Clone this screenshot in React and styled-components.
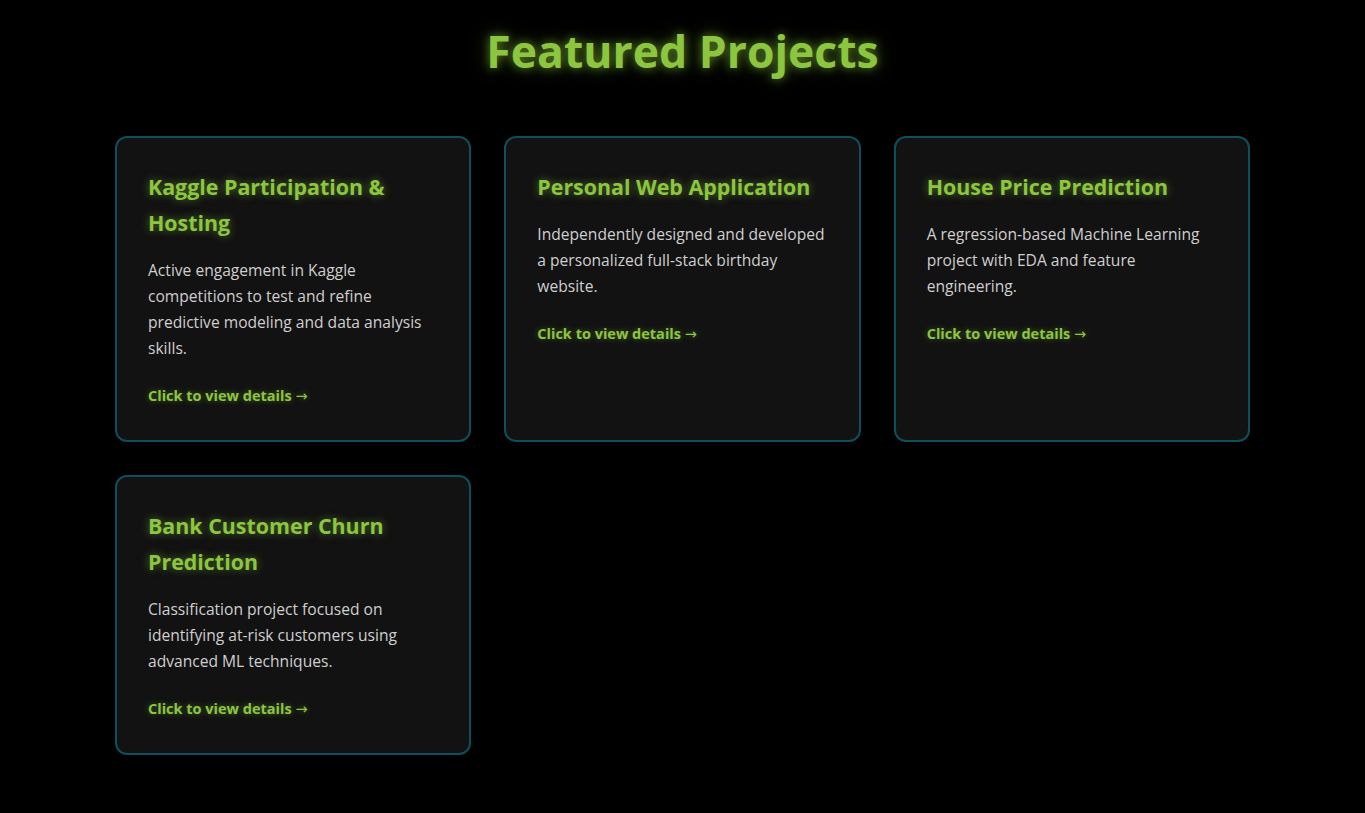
import React from 'react';
import styled, { createGlobalStyle } from 'styled-components';

const projects = [
  {
    title: 'Kaggle Participation & Hosting',
    text: 'Active engagement in Kaggle competitions to test and refine predictive modeling and data analysis skills.',
  },
  {
    title: 'Personal Web Application',
    text: 'Independently designed and developed a personalized full-stack birthday website.',
  },
  {
    title: 'House Price Prediction',
    text: 'A regression-based Machine Learning project with EDA and feature engineering.',
  },
  {
    title: 'Bank Customer Churn Prediction',
    text: 'Classification project focused on identifying at-risk customers using advanced ML techniques.',
  },
];

const App = () => {
  return (
    <>
      <GlobalStyle />
      <Section>
        <Heading>Featured Projects</Heading>
        <Grid>
          {projects.map((p) => (
            <Card key={p.title}>
              <CardTitle>{p.title}</CardTitle>
              <CardText>{p.text}</CardText>
              <DetailsLink>
                Click to view details <Arrow>→</Arrow>
              </DetailsLink>
            </Card>
          ))}
        </Grid>
      </Section>
    </>
  );
};

const GlobalStyle = createGlobalStyle`
  body {
    margin: 0;
    background: #000;
    font-family: "Segoe UI", "Open Sans", "Noto Sans", sans-serif;
  }
`;

const Section = styled.section`
  min-height: 813px;
  padding: 22px 0 40px;
  box-sizing: border-box;
  background: #000;
`;

const Heading = styled.h1`
  margin: 0 0 56px;
  text-align: center;
  font-size: 44.5px;
  line-height: 58px;
  font-weight: 700;
  color: #8cc63f;
  text-shadow: 0 0 10px rgba(140, 198, 63, 0.6), 0 0 22px rgba(140, 198, 63, 0.35);
`;

const Grid = styled.div`
  display: grid;
  grid-template-columns: repeat(3, 1fr);
  gap: 33px;
  max-width: 1135px;
  margin: 0 auto;
`;

const Card = styled.div`
  background: #121212;
  border: 2px solid #0d4f5c;
  border-radius: 12px;
  padding: 31px 31px 33px;
`;

const CardTitle = styled.h3`
  margin: 0 0 16px;
  font-size: 21.4px;
  line-height: 36px;
  font-weight: 700;
  color: #8cc63f;
  text-shadow: 0 0 8px rgba(140, 198, 63, 0.55);
`;

const CardText = styled.p`
  margin: 0;
  font-size: 15.6px;
  line-height: 26px;
  color: #cfcfcf;
`;

const DetailsLink = styled.span`
  display: block;
  margin-top: 24px;
  font-size: 14.5px;
  line-height: 22px;
  font-weight: 700;
  color: #8cc63f;
  text-shadow: 0 0 6px rgba(140, 198, 63, 0.45);
  cursor: pointer;
`;

const Arrow = styled.span`
  font-family: "DejaVu Sans", sans-serif;
  font-weight: 400;
`;

export default App;
